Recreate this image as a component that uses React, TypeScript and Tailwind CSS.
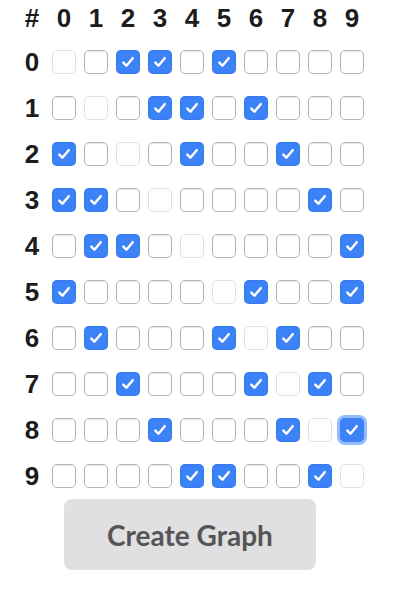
import React from "react";

const checked: number[][] = [
  [2, 3, 5],
  [3, 4, 6],
  [0, 4, 7],
  [0, 1, 8],
  [1, 2, 9],
  [0, 6, 9],
  [1, 5, 7],
  [2, 6, 8],
  [3, 7, 9],
  [4, 5, 8],
];

function Box({ on, disabled, focus }: { on: boolean; disabled: boolean; focus: boolean }) {
  if (on) {
    return (
      <div
        className={
          "w-[24px] h-[24px] rounded-[5px] bg-[#3b82f6] flex items-center justify-center " +
          (focus ? "shadow-[0_0_0_3px_rgba(59,130,246,0.55)]" : "shadow-[inset_0_0_0_0.5px_rgba(0,0,0,0.12)]")
        }
      >
        <svg width="18" height="18" viewBox="0 0 16 16">
          <path d="M3.8 8.6 L6.6 11.3 L12.2 4.6" fill="none" stroke="white" strokeWidth="2.2" strokeLinecap="round" strokeLinejoin="round" />
        </svg>
      </div>
    );
  }
  return (
    <div
      className={
        "w-[24px] h-[24px] rounded-[5px] bg-white border " +
        (disabled
          ? "border-[#e2e2e2]"
          : "border-[#b3b3b3] shadow-[inset_0_1px_1px_rgba(0,0,0,0.08)]")
      }
    />
  );
}

export default function App() {
  const digits = [0, 1, 2, 3, 4, 5, 6, 7, 8, 9];
  return (
    <div className="w-[400px] h-[598px] bg-white" style={{ fontFamily: '"Liberation Sans", Arial, sans-serif' }}>
      <div className="pl-[16px]">
        <div className="flex h-[39px] pb-[3px] items-center text-[26px] leading-none font-bold text-[#1c1c1c]">
          <div className="w-[32px] text-center">#</div>
          {digits.map((d) => (
            <div key={d} className="w-[32px] text-center">{d}</div>
          ))}
        </div>
        {digits.map((r) => (
          <div key={r} className="flex h-[46px] items-center">
            <div className="w-[32px] text-center text-[26px] leading-none font-bold text-[#1c1c1c]">{r}</div>
            {digits.map((c) => (
              <div key={c} className="w-[32px] flex justify-center">
                <Box on={checked[r].includes(c)} disabled={r === c} focus={r === 8 && c === 9} />
              </div>
            ))}
          </div>
        ))}
      </div>
      <div className="pl-[64px]">
        <button
          className="w-[252px] h-[71px] rounded-[8px] bg-[#e0e0e2] text-[#555555] text-[28px] font-bold"
          style={{ fontFamily: 'Lato, sans-serif' }}
        >
          Create Graph
        </button>
      </div>
    </div>
  );
}
